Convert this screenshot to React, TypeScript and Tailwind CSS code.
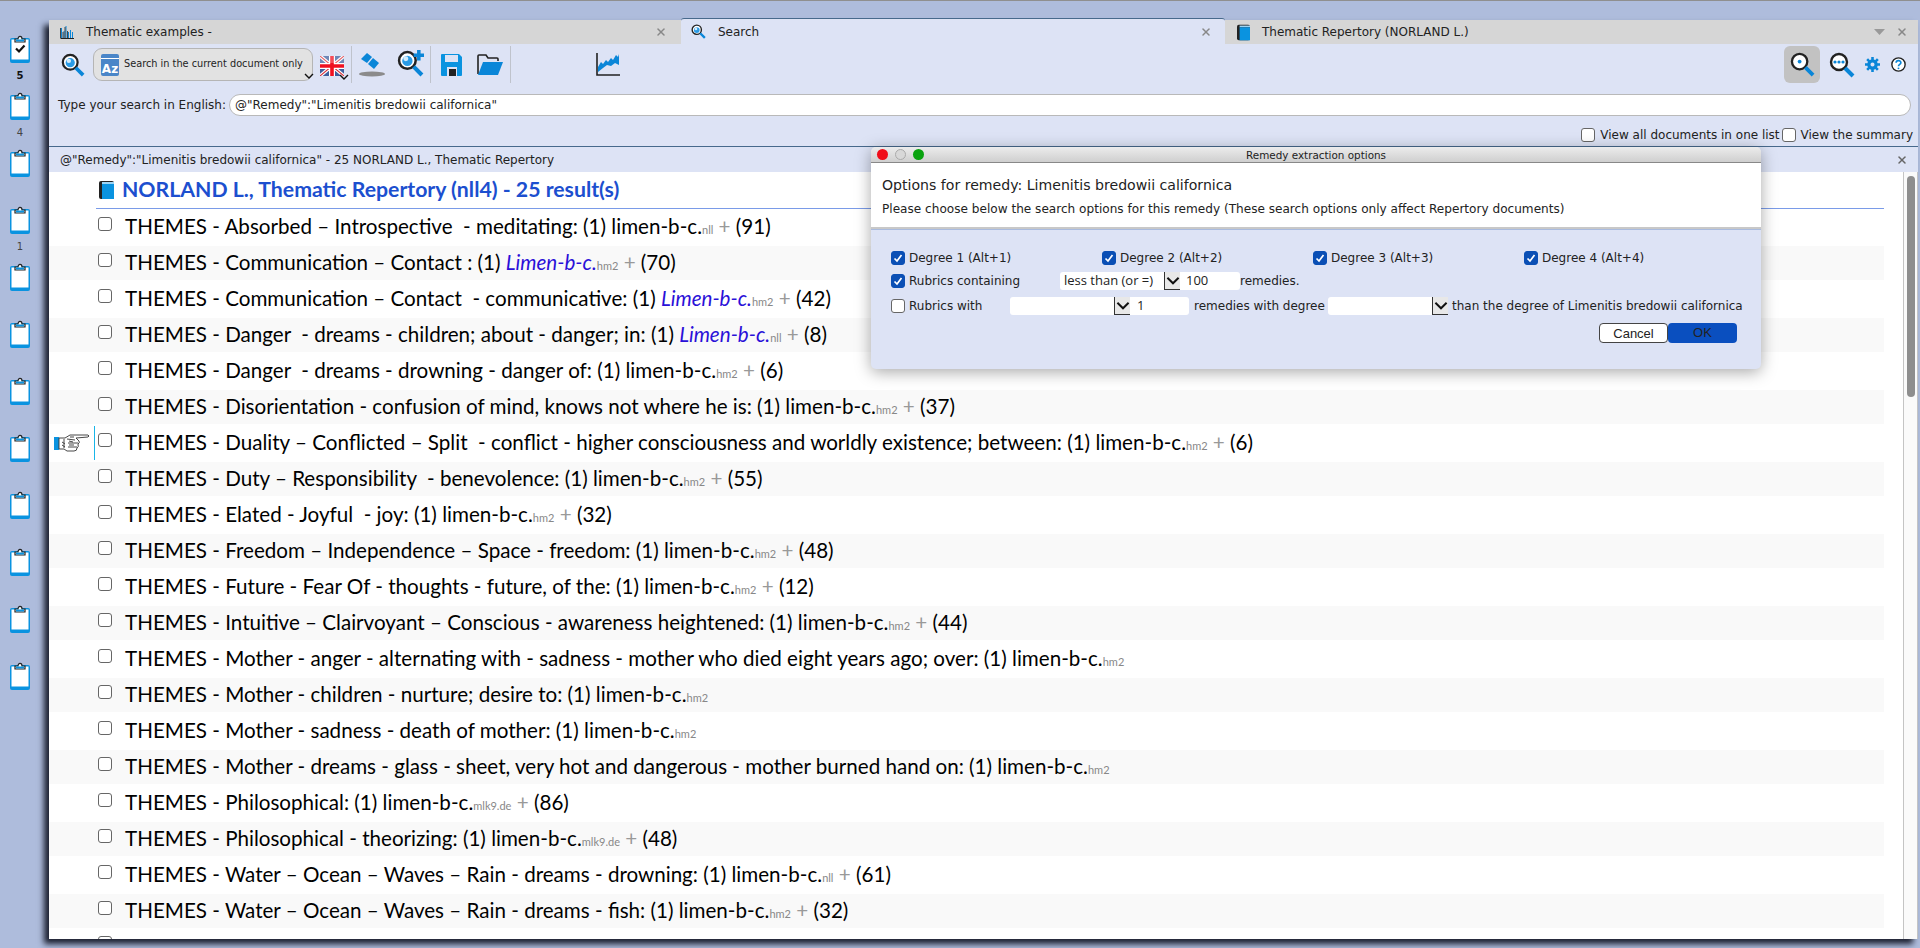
import { X } from "lucide-react";

const rows = [
  { t: "Absorbed – Introspective  - meditating", src: "nll", n: 91 },
  { t: "Communication – Contact ", src: "hm2", n: 70, em: true },
  { t: "Communication – Contact  - communicative", src: "hm2", n: 42, em: true },
  { t: "Danger  - dreams - children; about - danger; in", src: "nll", n: 8, em: true },
  { t: "Danger  - dreams - drowning - danger of", src: "hm2", n: 6 },
  { t: "Disorientation - confusion of mind, knows not where he is", src: "hm2", n: 37 },
  { t: "Duality – Conflicted – Split  - conflict - higher consciousness and worldly existence; between", src: "hm2", n: 6 },
  { t: "Duty – Responsibility  - benevolence", src: "hm2", n: 55 },
  { t: "Elated - Joyful  - joy", src: "hm2", n: 32 },
  { t: "Freedom – Independence – Space - freedom", src: "hm2", n: 48 },
  { t: "Future - Fear Of - thoughts - future, of the", src: "hm2", n: 12 },
  { t: "Intuitive – Clairvoyant – Conscious - awareness heightened", src: "hm2", n: 44 },
  { t: "Mother - anger - alternating with - sadness - mother who died eight years ago; over", src: "hm2" },
  { t: "Mother - children - nurture; desire to", src: "hm2" },
  { t: "Mother - sadness - death of mother", src: "hm2" },
  { t: "Mother - dreams - glass - sheet, very hot and dangerous - mother burned hand on", src: "hm2" },
  { t: "Philosophical", src: "mlk9.de", n: 86 },
  { t: "Philosophical - theorizing", src: "mlk9.de", n: 48 },
  { t: "Water – Ocean – Waves – Rain - dreams - drowning", src: "nll", n: 61 },
  { t: "Water – Ocean – Waves – Rain - dreams - fish", src: "hm2", n: 32 },
];

const clips = [
  { check: true, label: "5", bold: true },
  { label: "4" },
  {},
  { label: "1" },
  {},
  {},
  {},
  {},
  {},
  {},
  {},
  {},
];

const Clipboard = ({ check }: { check?: boolean }) => (
  <svg width="20" height="28" viewBox="0 0 20 28">
    <rect x="0" y="3" width="20" height="25" rx="2" fill="#0a93e0" />
    <rect x="1.5" y="4.5" width="17" height="20" fill="#fff" />
    <path d="M5 7 V4 H8 C8 0.5 12 0.5 12 4 H15 V7 Z" fill="#fff" stroke="#222" strokeWidth="1.2" />
    <rect x="6" y="4.5" width="8" height="2" fill="#0a93e0" />
    {check && <path d="M6 13.5 L9 16.5 L14.5 10.5" fill="none" stroke="#111" strokeWidth="2.2" />}
  </svg>
);

const Magnifier = ({ size = 26, dots, dot, filled, plus }: { size?: number; dots?: boolean; dot?: boolean; filled?: boolean; plus?: boolean }) => (
  <svg width={size} height={size} viewBox="0 0 26 26">
    <circle cx="10" cy="10" r="8" fill="#fff" stroke="#222" strokeWidth="2.4" />
    <path d="M16 16 L24 24" stroke="#0a86d8" strokeWidth="4" />
    {dot && <circle cx="10" cy="10" r="2" fill="#0a86d8" />}
    {filled && (
      <>
        <circle cx="10" cy="10.5" r="5" fill="#2a9be6" />
        <circle cx="8.5" cy="8.5" r="2.4" fill="#d4ecfb" />
      </>
    )}
    {dots && (
      <g fill="#0a86d8">
        <circle cx="6" cy="10" r="1.6" />
        <circle cx="10" cy="10" r="1.6" />
        <circle cx="14" cy="10" r="1.6" />
      </g>
    )}
    {plus && <path d="M21 0 V10 M16 5 H26" stroke="#0a86d8" strokeWidth="3.4" />}
  </svg>
);

const BookIcon = ({ className }: { className?: string }) => (
  <svg className={className} viewBox="0 0 15 18">
    <rect x="0" y="0" width="15" height="18" rx="2" fill="#222" />
    <rect x="3" y="1" width="12" height="2" fill="#9cd4f5" />
    <rect x="3" y="3" width="12" height="15" fill="#0a93e0" />
  </svg>
);

const Chevron = ({ className }: { className?: string }) => (
  <svg className={className} viewBox="0 0 10 6">
    <path d="M1 1 L5 5 L9 1" fill="none" stroke="#111" strokeWidth="1.4" />
  </svg>
);

const Flag = () => (
  <svg width="24" height="20" viewBox="0 0 24 20">
    <rect width="24" height="20" fill="#3f5f9f" />
    <path d="M0 0 L24 20 M24 0 L0 20" stroke="#fff" strokeWidth="3.4" />
    <path d="M0 0 L24 20 M24 0 L0 20" stroke="#d8303a" strokeWidth="1.1" />
    <path d="M12 0 V20 M0 10 H24" stroke="#fff" strokeWidth="6" />
    <path d="M12 0 V20 M0 10 H24" stroke="#f01020" strokeWidth="3.6" />
    <rect width="24" height="7" fill="#fff" opacity="0.25" />
  </svg>
);

const Eraser = () => (
  <svg width="26" height="24" viewBox="0 0 26 24">
    <path d="M8 0 L13 4 L8 10 L2 6 Z" fill="#0a86d8" />
    <path d="M14 5 L20 10 L15 16 L9 11 Z" fill="#0a86d8" />
    <ellipse cx="13" cy="21" rx="13" ry="2.4" fill="#8b8b8b" />
  </svg>
);

const Save = () => (
  <svg width="21" height="22" viewBox="0 0 21 22">
    <path d="M1 0 H18 L21 3 V21 Q21 22 20 22 H1 Q0 22 0 21 V1 Q0 0 1 0 Z" fill="#0a93e0" />
    <rect x="4" y="1" width="13" height="7" fill="#dde3f5" />
    <rect x="6" y="13" width="10" height="9" fill="#dde3f5" />
    <rect x="8" y="15" width="7" height="7" fill="#222" />
  </svg>
);

const Folder = () => (
  <svg width="26" height="21" viewBox="0 0 26 21">
    <path d="M1 20 V2 Q1 1 2 1 H9 L11 4 H20 Q21 4 21 5 V7" fill="none" stroke="#222" strokeWidth="1.6" />
    <path d="M6 8 H26 L21 21 H1 Z" fill="#0a86d8" />
  </svg>
);

const ChartIcon = () => (
  <svg width="24" height="23" viewBox="0 0 24 23">
    <path d="M2 14 L5 9 L7 11 L10 7 L12 9 L15 5 L17 7 L20 2 L22 4 L23 1 V12 L19 10 L15 13 L11 12 L7 15 L2 19 Z" fill="#0a86d8" />
    <path d="M1 0 V22 H24" fill="none" stroke="#222" strokeWidth="1.6" />
  </svg>
);

const BarsIcon = () => (
  <svg width="14" height="14" viewBox="0 0 14 14">
    <path d="M0.5 13.5 H14" stroke="#222" strokeWidth="1" />
    <path d="M1.5 13 V3 M4 13 V6 M6 13 V1 M8.5 13 V7 M10.5 13 V5 M12.5 13 V7" stroke="#0a86d8" strokeWidth="1" />
    <path d="M0.5 13 V3 M3 13 V7 M5 13 V2 M7.5 13 V6" stroke="#222" strokeWidth="0.8" />
  </svg>
);

const Gear = () => (
  <svg width="15" height="15" viewBox="0 0 14 14">
    <circle cx="7" cy="7" r="3.4" fill="none" stroke="#0a86d8" strokeWidth="3" />
    <path d="M7 0 V3 M7 11 V14 M0 7 H3 M11 7 H14 M2 2 L4 4 M10 10 L12 12 M12 2 L10 4 M2 12 L4 10" stroke="#0a86d8" strokeWidth="2.4" />
  </svg>
);

const Help = () => (
  <svg width="15" height="15" viewBox="0 0 14 14">
    <circle cx="7" cy="7" r="6.2" fill="#fff" stroke="#222" strokeWidth="1.3" />
    <path d="M4.8 5.4 C4.8 2.8 9.2 2.8 9.2 5.3 C9.2 7 7 6.8 7 8.6" fill="none" stroke="#0a86d8" strokeWidth="1.6" />
    <circle cx="7" cy="10.6" r="0.9" fill="#0a86d8" />
  </svg>
);

const Hand = () => (
  <svg width="37" height="19" viewBox="0 0 37 19">
    <rect x="1" y="3" width="5" height="13" fill="#0a93e0" />
    <path d="M6 4 H12 L17 1 H35 Q37 2 35 3 L23 4 L26 7 Q27 9 25 10 Q26 13 24 14 Q24 17 21 17 H14 L11 15 H6 Z" fill="#fff" stroke="#333" strokeWidth="0.9" />
    <path d="M14 5 L22 6 M15 9 L25 9 M15 13 L24 13 M11 5 V14 M17 3 L21 3 M9 8 L12 10 M9 11 L12 13 M16 7 L20 8 M16 11 L21 11" stroke="#333" strokeWidth="0.9" fill="none" />
  </svg>
);

const Separator = () => <div className="w-px h-[37px] bg-[#bfc3cc]" />;

const Check = ({ on }: { on?: boolean }) => (
  <span className={`flex shrink-0 items-center justify-center w-[14px] h-[14px] rounded-[3px] border ${on ? "bg-[#0a4fb5] border-[#0a4fb5]" : "bg-white border-[#666]"}`}>
    {on && (
      <svg width="10" height="10" viewBox="0 0 10 10">
        <path d="M1.5 5.5 L4 8 L8.5 2" fill="none" stroke="#fff" strokeWidth="1.7" />
      </svg>
    )}
  </span>
);

const Select = ({ value }: { value?: string }) => (
  <div className="flex w-[120px] h-[18px] shrink-0 items-center justify-between bg-white rounded-l-[3px] pl-[4px] text-[13px] font-['Open_Sans',sans-serif]">
    <span>{value}</span>
    <span className="flex items-center justify-center w-[16px] h-[18px] border-l border-b border-[#333] bg-[#e8e8e8]">
      <Chevron className="w-[14px] h-[9px]" />
    </span>
  </div>
);

export default function App() {
  return (
    <div className="relative flex flex-col w-[1920px] h-[948px] overflow-hidden bg-[#aebcdc] border-t border-[#8f8f8f] font-['DejaVu_Sans',sans-serif] text-[#222] text-[12px]">
      <div className="flex flex-1">
        {/* clipboards */}
        <div className="w-[40px] mr-[9px] pt-[34px] flex flex-col items-center">
          {clips.map((c, i) => (
            <div key={i} className="h-[57px] flex flex-col items-center">
              <Clipboard check={c.check} />
              {c.label && <span className={`mt-[7px] text-[10px] leading-[12px] ${c.bold ? "font-bold text-[#111]" : "text-[#444]"}`}>{c.label}</span>}
            </div>
          ))}
        </div>

        {/* window */}
        <div className="relative flex flex-col w-[1869px] h-[919px] mt-[19px] bg-white shadow-[-5px_5px_6px_#1c2030]">
          {/* tabs */}
          <div className="flex h-[24px] bg-[#d6d6d6]">
            <div className="flex items-center w-[632px] pl-[11px] pr-[14px]">
              <BarsIcon />
              <span className="ml-[12px] flex-1">Thematic examples -</span>
              <X size={12} strokeWidth={3} className="text-[#888]" />
            </div>
            <div className="flex items-center w-[544px] -mt-[2px] h-[26px] pl-[10px] pr-[13px] bg-[#dde3f5] border-t border-[#47698c] rounded-t-[3px]">
              <Magnifier size={15} filled />
              <span className="ml-[12px] flex-1">Search</span>
              <X size={12} strokeWidth={3} className="text-[#888]" />
            </div>
            <div className="flex items-center flex-1 pl-[12px] pr-[10px]">
              <BookIcon className="w-[13px] h-[17px]" />
              <span className="ml-[12px] flex-1">Thematic Repertory (NORLAND L.)</span>
              <svg width="11" height="6" viewBox="0 0 11 6" className="mr-[11px]">
                <path d="M0 0 H11 L5.5 6 Z" fill="#999" />
              </svg>
              <X size={12} strokeWidth={3} className="text-[#888]" />
            </div>
          </div>

          {/* toolbar */}
          <div className="bg-[#dde3f5]">
            <div className="flex items-center h-[41px] pl-[12px] pr-[12px]">
              <Magnifier size={24} filled />
              <div className="relative flex items-center w-[220px] h-[33px] ml-[8px] pl-[7px] rounded-[9px] border border-[#b5b5b5] bg-[#e2e2e2] text-[9.75px]">
                <div className="flex flex-col w-[18px] h-[22px] rounded-[2px] bg-[#4a86c8] text-white text-[12px] font-bold leading-[14px] items-center justify-end">
                  <span className="w-full h-px mb-[3px] bg-white" />
                  Az
                </div>
                <span className="ml-[5px] whitespace-nowrap">Search in the current document only</span>
                <Chevron className="absolute right-[-2px] bottom-[1px] w-[10px] h-[6px]" />
              </div>
              <div className="relative ml-[7px] mt-[2px]">
                <Flag />
                <Chevron className="absolute right-[-5px] bottom-[-4px] w-[10px] h-[6px]" />
              </div>
              <div className="ml-[7px]"><Separator /></div>
              <div className="ml-[7px] mt-[1px]"><Eraser /></div>
              <div className="ml-[12px] -mt-[3px]"><Magnifier size={27} filled plus /></div>
              <div className="ml-[6px]"><Separator /></div>
              <div className="ml-[10px]"><Save /></div>
              <div className="ml-[15px]"><Folder /></div>
              <div className="ml-[7px]"><Separator /></div>
              <div className="ml-[85px]"><ChartIcon /></div>
              <div className="ml-auto flex items-center justify-center w-[36px] h-[37px] rounded-[6px] bg-[#c2c2c2]">
                <Magnifier size={25} dot />
              </div>
              <div className="ml-[9px]"><Magnifier size={26} dots /></div>
              <div className="ml-[10px]"><Gear /></div>
              <div className="ml-[11px]"><Help /></div>
            </div>

            <div className="flex items-center mt-[9px] h-[22px] pl-[9px] pr-[7px]">
              <span className="w-[171px] shrink-0 whitespace-nowrap">Type your search in English:</span>
              <div className="flex flex-1 items-center h-[22px] pl-[5px] rounded-[11px] bg-white border border-[#b9b9b9]">@"Remedy":"Limenitis bredowii californica"</div>
            </div>

            <div className="flex items-center justify-end h-[30px] pt-[8px] pr-[5px]">
              <Check />
              <span className="ml-[5px]">View all documents in one list</span>
              <span className="ml-[2px]"><Check /></span>
              <span className="ml-[5px]">View the summary</span>
            </div>
          </div>

          {/* results header */}
          <div className="flex items-center justify-between h-[26px] pl-[11px] pr-[10px] bg-[#dde3f5] border-t border-[#47698c]">
            <span>@"Remedy":"Limenitis bredowii californica" - 25 NORLAND L., Thematic Repertory</span>
            <X size={12} strokeWidth={3} className="text-[#666]" />
          </div>

          {/* results */}
          <div className="flex flex-1 min-h-0">
            <div className="flex-1 overflow-hidden font-['Lato',sans-serif] text-[20.6px] text-black">
              <div className="flex items-center h-[36px] pl-[50px]">
                <BookIcon className="w-[15px] h-[18px]" />
                <span className="ml-[8px] text-[21.25px] font-bold text-[#1c4fcf]">NORLAND L., Thematic Repertory (nll4) - 25 result(s)</span>
              </div>
              <div className="h-px ml-[47px] mr-[19px] bg-[#7a9be8]" />
              {rows.map((r, i) => (
                <div key={i} className="flex items-center h-[36px] mr-[19px]">
                  <div className={`flex items-center w-full h-[34px] ${i % 2 === 1 ? "bg-[#f9f9f9]" : ""}`}>
                    <div className={`flex items-center shrink-0 w-[46px] h-[34px] pl-[4px] ${i === 6 ? "border-r border-[#19b5e8]" : ""}`}>
                      {i === 6 && <Hand />}
                    </div>
                    <span className="ml-[3px] -mt-[6px]"><Check /></span>
                    <span className="ml-[13px] -mt-[1px] whitespace-pre">
                      THEMES - {r.t}: (1){" "}
                      {r.em ? <span className="italic text-[#2a10d8]">Limen-b-c.</span> : "limen-b-c."}
                      <span className="text-[11px] text-[#888]">{r.src}</span>
                      {r.n !== undefined && (
                        <>
                          <span className="text-[#999]"> + </span>({r.n})
                        </>
                      )}
                    </span>
                  </div>
                </div>
              ))}
              <div className="pl-[49px] pt-[7px]">
                <Check />
              </div>
            </div>
            <div className="w-[15px] border-l border-r border-[#c4c4c4] bg-[#fafafa] pt-[4px] pl-[3px]">
              <div className="w-[8px] h-[221px] rounded-full bg-[#8e8e8e]" />
            </div>
          </div>

          {/* remedy dialog */}
          <div className="absolute left-[822px] top-[127px] w-[890px] h-[222px] flex flex-col rounded-[5px] overflow-hidden bg-[#dde3f5] shadow-[0_3px_16px_rgba(0,0,0,0.35)]">
            <div className="relative flex items-center justify-center h-[16px] pt-[3px] bg-gradient-to-b from-[#ececec] to-[#cfcfcf] border-b border-[#888] text-[10.4px]">
              <div className="absolute left-[6px] top-[2px] flex gap-[7px]">
                <span className="w-[11px] h-[11px] rounded-full bg-[#f00d18]" />
                <span className="w-[11px] h-[11px] rounded-full bg-[#d8d8d8] border border-[#aaa]" />
                <span className="w-[11px] h-[11px] rounded-full bg-[#0aa30f]" />
              </div>
              Remedy extraction options
            </div>
            <div className="h-[66px] pl-[11px] pt-[12px] bg-white border-b-2 border-[#c8c8c8]">
              <div className="text-[14.1px] leading-[20px]">Options for remedy: Limenitis bredowii californica</div>
              <div className="mt-[6px] leading-[16px] text-[12.1px]">Please choose below the search options for this remedy (These search options only affect Repertory documents)</div>
            </div>
            <div className="flex-1 pl-[20px] pt-[19px] border-t border-[#a9bbdf]">
              <div className="flex items-center h-[18px]">
                {["Degree 1 (Alt+1)", "Degree 2 (Alt+2)", "Degree 3 (Alt+3)", "Degree 4 (Alt+4)"].map(d => (
                  <label key={d} className="flex items-center gap-[4px] w-[211px]">
                    <Check on />
                    {d}
                  </label>
                ))}
              </div>
              <div className="flex items-center h-[18px] mt-[5px]">
                <label className="flex items-center gap-[4px] w-[169px] shrink-0">
                  <Check on />
                  Rubrics containing
                </label>
                <Select value="less than (or =)" />
                <span className="flex items-center w-[60px] h-[18px] pl-[6px] bg-white rounded-r-[3px] text-[13px] font-['Open_Sans',sans-serif]">100</span>
                <span>remedies.</span>
              </div>
              <div className="flex items-center h-[18px] mt-[7px]">
                <label className="flex items-center gap-[4px] w-[119px] shrink-0">
                  <Check />
                  Rubrics with
                </label>
                <Select />
                <span className="flex items-center shrink-0 w-[59px] h-[18px] pl-[7px] bg-white rounded-r-[3px] text-[13px] font-['Open_Sans',sans-serif]">1</span>
                <span className="ml-[5px] w-[134px] shrink-0 whitespace-nowrap">remedies with degree</span>
                <Select />
                <span className="ml-[4px] whitespace-nowrap">than the degree of Limenitis bredowii californica</span>
              </div>
              <div className="flex justify-end mt-[8px] mr-[24px]">
                <button className="w-[69px] h-[20px] rounded-[4px] bg-white border border-[#444] text-[13px] font-['Liberation_Sans',sans-serif]">Cancel</button>
                <button className="w-[69px] h-[20px] rounded-[4px] bg-[#0a4fbf] text-[13px] font-['Liberation_Sans',sans-serif]">OK</button>
              </div>
            </div>
          </div>
        </div>
      </div>
    </div>
  );
}
